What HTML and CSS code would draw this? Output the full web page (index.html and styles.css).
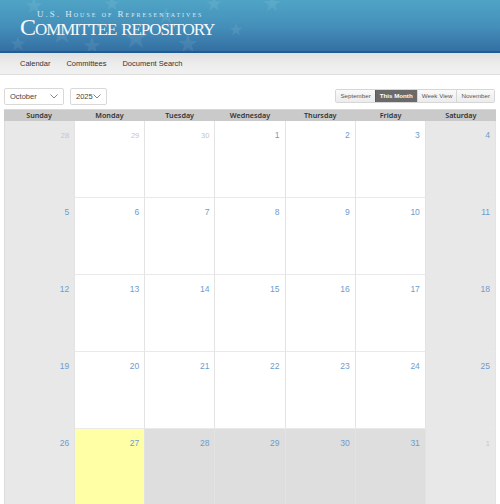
FILE: index.html
```html
<!DOCTYPE html>
<html lang="en">
<head>
<meta charset="utf-8">
<title>Committee Repository - Calendar</title>
<link rel="stylesheet" href="styles.css">
</head>
<body>
<header class="masthead">
  <svg class="stars" width="320" height="51" viewBox="0 0 320 51" aria-hidden="true">
    <defs>
      <polygon id="st" points="0,-10 2.35,-3.24 9.51,-3.09 3.8,1.24 5.88,8.09 0,4 -5.88,8.09 -3.8,1.24 -9.51,-3.09 -2.35,-3.24"/>
    </defs>
    <g fill="#ffffff" fill-opacity="0.08">
      <use href="#st" transform="translate(34,6) scale(0.9)"/>
      <use href="#st" transform="translate(62,34) scale(1.1)"/>
      <use href="#st" transform="translate(92,46) scale(0.9)"/>
      <use href="#st" transform="translate(112,4) scale(0.8)"/>
      <use href="#st" transform="translate(136,38) scale(1.2)"/>
      <use href="#st" transform="translate(166,16) scale(0.9)"/>
      <use href="#st" transform="translate(188,44) scale(1)"/>
      <use href="#st" transform="translate(214,4) scale(0.8)"/>
      <use href="#st" transform="translate(236,30) scale(0.7)"/>
      <use href="#st" transform="translate(272,4) scale(0.9)"/>
      <use href="#st" transform="translate(18,44) scale(0.8)"/>
    </g>
  </svg>
  <div class="brand">
    <div class="brand-sub">U.S. House of Representatives</div>
    <div class="brand-main">Committee repository</div>
  </div>
</header>
<nav class="nav">
  <a class="nav-link">Calendar</a>
  <a class="nav-link">Committees</a>
  <a class="nav-link">Document Search</a>
</nav>
<main class="page">
  <div class="controls">
    <div class="selects">
      <div class="select select-month"><span>October</span>
        <svg width="8" height="5" viewBox="0 0 8 5"><path d="M0.5 0.5 L4 4 L7.5 0.5" fill="none" stroke="#777" stroke-width="0.9"/></svg></div>
      <div class="select select-year"><span>2025</span>
        <svg width="8" height="5" viewBox="0 0 8 5"><path d="M0.5 0.5 L4 4 L7.5 0.5" fill="none" stroke="#777" stroke-width="0.9"/></svg></div>
    </div>
    <div class="btn-group">
      <span class="btn">September</span>
      <span class="btn btn-active">This Month</span>
      <span class="btn">Week View</span>
      <span class="btn">November</span>
    </div>
  </div>
  <div class="calendar">
    <div class="dow-row">
      <div>Sunday</div><div>Monday</div><div>Tuesday</div><div>Wednesday</div><div>Thursday</div><div>Friday</div><div>Saturday</div>
    </div>
    <div class="grid">
      <div class="cell weekend other"><span class="num">28</span></div>
      <div class="cell other"><span class="num">29</span></div>
      <div class="cell other"><span class="num">30</span></div>
      <div class="cell"><span class="num">1</span></div>
      <div class="cell"><span class="num">2</span></div>
      <div class="cell"><span class="num">3</span></div>
      <div class="cell weekend"><span class="num">4</span></div>

      <div class="cell weekend"><span class="num">5</span></div>
      <div class="cell"><span class="num">6</span></div>
      <div class="cell"><span class="num">7</span></div>
      <div class="cell"><span class="num">8</span></div>
      <div class="cell"><span class="num">9</span></div>
      <div class="cell"><span class="num">10</span></div>
      <div class="cell weekend"><span class="num">11</span></div>

      <div class="cell weekend"><span class="num">12</span></div>
      <div class="cell"><span class="num">13</span></div>
      <div class="cell"><span class="num">14</span></div>
      <div class="cell"><span class="num">15</span></div>
      <div class="cell"><span class="num">16</span></div>
      <div class="cell"><span class="num">17</span></div>
      <div class="cell weekend"><span class="num">18</span></div>

      <div class="cell weekend"><span class="num">19</span></div>
      <div class="cell"><span class="num">20</span></div>
      <div class="cell"><span class="num">21</span></div>
      <div class="cell"><span class="num">22</span></div>
      <div class="cell"><span class="num">23</span></div>
      <div class="cell"><span class="num">24</span></div>
      <div class="cell weekend"><span class="num">25</span></div>

      <div class="cell weekend"><span class="num">26</span></div>
      <div class="cell today"><span class="num">27</span></div>
      <div class="cell upcoming"><span class="num">28</span></div>
      <div class="cell upcoming"><span class="num">29</span></div>
      <div class="cell upcoming"><span class="num">30</span></div>
      <div class="cell upcoming"><span class="num">31</span></div>
      <div class="cell weekend other"><span class="num">1</span></div>
    </div>
  </div>
</main>
</body>
</html>
```
FILE: styles.css
```css
html, body {
  margin: 0;
  padding: 0;
  background: #ffffff;
  font-family: "Liberation Sans", Arial, sans-serif;
  color: #333;
}

.masthead {
  position: relative;
  height: 51px;
  background: linear-gradient(to bottom, #4fa4c5 0%, #4590bb 50%, #3470a3 100%);
  border-bottom: 2px solid #1f5c97;
  overflow: hidden;
}

.stars {
  position: absolute;
  left: 0;
  top: 0;
}

.brand {
  position: relative;
  padding: 10px 0 0 20px;
  font-family: "Liberation Serif", "Times New Roman", serif;
  font-variant: small-caps;
  color: #ffffff;
}

.brand-sub {
  height: 8px;
  padding-left: 17px;
  font-size: 9px;
  line-height: 8px;
  letter-spacing: 2px;
  color: #dbe9f4;
}

.brand-main {
  font-size: 24px;
  line-height: 18px;
  letter-spacing: -1.05px;
  color: #f6fafd;
}

.nav {
  display: flex;
  gap: 16px;
  height: 21px;
  align-items: center;
  padding-left: 20px;
  background: linear-gradient(to bottom, #e0e0e0 0%, #ececec 50%, #f1f1f1 100%);
  border-bottom: 1px solid #dddddd;
}

.nav-link {
  font-size: 7.5px;
  color: #333;
}

.page {
  padding: 13px 4px 0 4px;
}

.controls {
  display: flex;
  justify-content: space-between;
  align-items: flex-start;
}

.selects {
  display: flex;
  gap: 6px;
}

.select {
  display: flex;
  align-items: center;
  justify-content: space-between;
  box-sizing: border-box;
  height: 17px;
  padding: 0 5px 0 5px;
  border: 1px solid #d9d9d9;
  border-radius: 2px;
  background: #fff;
  font-size: 7.5px;
  color: #444;
}

.select-month { width: 60px; }
.select-year { width: 37px; }

.btn-group {
  display: flex;
  margin-top: 1px;
  margin-right: 1px;
  border: 1px solid #d6d6d6;
  border-radius: 2px;
  overflow: hidden;
}

.btn {
  box-sizing: border-box;
  height: 12px;
  line-height: 12px;
  padding: 0 4px;
  font-size: 6.2px;
  color: #555;
  background: linear-gradient(to bottom, #fafafa, #ececec);
  border-left: 1px solid #d6d6d6;
}

.btn:first-child { border-left: none; }

.btn-active {
  background: #6a6a6a;
  color: #ffffff;
  font-weight: bold;
  border-left-color: #5a5a5a;
}

.calendar {
  margin-top: 4px;
}

.dow-row {
  display: grid;
  grid-template-columns: repeat(7, 1fr);
  height: 12px;
  background: #cacaca;
  border-top: 1px solid #d8d8d8;
  box-sizing: border-box;
}

.dow-row div {
  text-align: center;
  font-family: "Noto Sans", "DejaVu Sans", sans-serif;
  font-weight: 600;
  font-size: 7.2px;
  line-height: 11px;
  color: #333;
}

.grid {
  display: grid;
  grid-template-columns: repeat(7, 1fr);
  border-left: 1px solid #dcdcdc;
}

.cell {
  box-sizing: border-box;
  height: 77px;
  padding: 3px 5px 0 0;
  text-align: right;
  background: #ffffff;
  border-right: 1px solid #e3e3e3;
  border-bottom: 1px solid #e9e9e9;
}

.num {
  font-size: 8.5px;
  line-height: 10px;
  color: #6d9ccf;
}

.weekend { background: #e8e8e8; }
.upcoming { background: #dedede; }
.today { background: #ffffa6; }
.other .num { color: #c6c6c6; font-size: 7.5px; }
```
